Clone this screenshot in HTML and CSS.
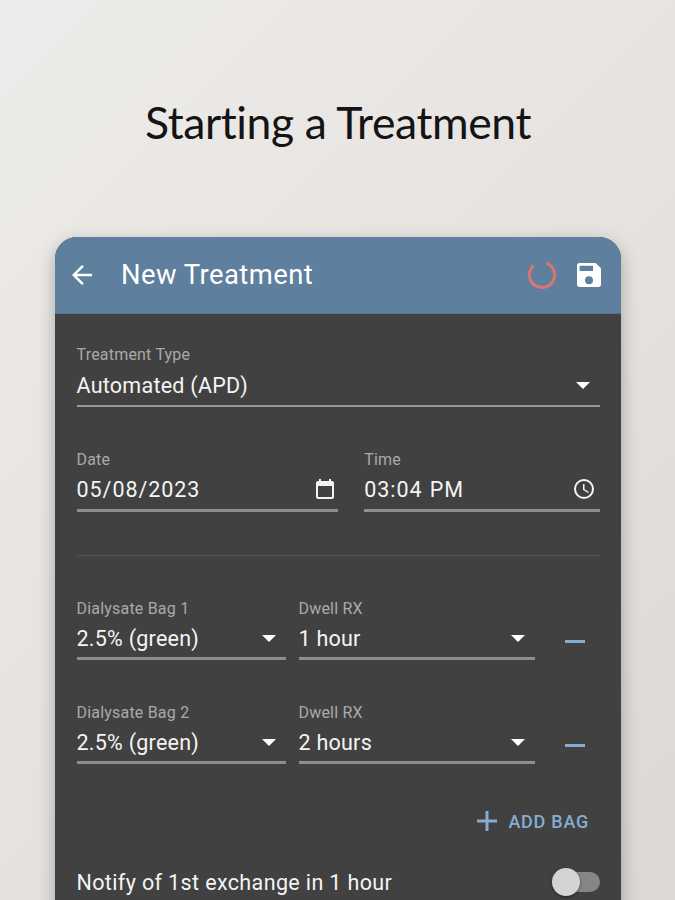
FILE: index.html
```html
<!DOCTYPE html>
<html lang="en">
<head>
<meta charset="utf-8">
<title>Starting a Treatment</title>
<link rel="stylesheet" href="styles.css">
</head>
<body>
<main class="screen">
  <h1 class="headline">Starting a Treatment</h1>
  <section class="card">
    <header class="appbar">
      <svg class="back" viewBox="0 0 24 24" width="30" height="30"><path d="M20 11H7.83l5.59-5.59L12 4l-8 8 8 8 1.41-1.41L7.83 13H20v-2z"/></svg>
      <div class="appbar-title">New Treatment</div>
      <svg class="spinner" viewBox="0 0 30 30" width="30" height="30"><path d="M19.5 3.2A12.6 12.6 0 1 1 6.6 5.6"/></svg>
      <svg class="save" viewBox="0 0 24 24" width="32" height="32"><path d="M17 3H5a2 2 0 0 0-2 2v14a2 2 0 0 0 2 2h14a2 2 0 0 0 2-2V7l-4-4zm-5 16a3 3 0 1 1 0-6 3 3 0 0 1 0 6zm3-10H5V5h10v4z"/></svg>
    </header>
    <div class="form">
      <div class="field field-type">
        <div class="label">Treatment Type</div>
        <div class="value-row"><span>Automated (APD)</span><span class="caret"></span></div>
      </div>
      <div class="row row-date">
        <div class="field field-date">
          <div class="label">Date</div>
          <div class="value-row"><span class="spaced">05/08/2023</span>
            <svg class="field-icon icon-cal" viewBox="0 0 24 24" width="24" height="24"><path d="M19 4h-1V2h-2v2H8V2H6v2H5a2 2 0 0 0-2 2v14a2 2 0 0 0 2 2h14a2 2 0 0 0 2-2V6a2 2 0 0 0-2-2zm0 16H5V9h14v11z"/></svg>
          </div>
        </div>
        <div class="field field-time">
          <div class="label">Time</div>
          <div class="value-row"><span class="spaced">03:04 PM</span>
            <svg class="field-icon icon-clock" viewBox="0 0 24 24" width="24" height="24"><path d="M12 2a10 10 0 1 0 0 20 10 10 0 0 0 0-20zm0 18a8 8 0 1 1 0-16 8 8 0 0 1 0 16zm.5-13H11v6l5.2 3.1.8-1.2-4.500-2.700V7z"/></svg>
          </div>
        </div>
      </div>
      <hr class="divider">
      <div class="row row-bag">
        <div class="field field-bag">
          <div class="label">Dialysate Bag 1</div>
          <div class="value-row"><span>2.5% (green)</span><span class="caret"></span></div>
        </div>
        <div class="field field-dwell">
          <div class="label">Dwell RX</div>
          <div class="value-row"><span>1 hour</span><span class="caret"></span></div>
        </div>
        <div class="minus"></div>
      </div>
      <div class="row row-bag">
        <div class="field field-bag">
          <div class="label">Dialysate Bag 2</div>
          <div class="value-row"><span>2.5% (green)</span><span class="caret"></span></div>
        </div>
        <div class="field field-dwell">
          <div class="label">Dwell RX</div>
          <div class="value-row"><span>2 hours</span><span class="caret"></span></div>
        </div>
        <div class="minus"></div>
      </div>
      <div class="add-row">
        <svg class="plus" viewBox="0 0 22 22" width="22" height="22"><path d="M9.500 1h3v8.500H21v3h-8.500V21h-3v-8.500H1v-3h8.500z"/></svg>
        <span>ADD BAG</span>
      </div>
      <div class="notify-row">
        <span>Notify of 1st exchange in 1 hour</span>
        <div class="switch"><div class="knob"></div></div>
      </div>
    </div>
  </section>
</main>
</body>
</html>
```
FILE: styles.css
```css
* { box-sizing: border-box; }
html, body { margin: 0; height: 100%; }
body { overflow: hidden; }
.screen {
  width: 675px;
  height: 900px;
  overflow: hidden;
  padding: 92px 54px 0 55px;
  background: linear-gradient(135deg, #eeecea 0%, #e5e2df 55%, #dcd8d4 100%);
}
.headline {
  margin: 0;
  height: 145px;
  font-family: "Lato", sans-serif;
  font-weight: 400;
  font-size: 44.500px;
  line-height: 60px;
  letter-spacing: -0.4px;
  text-align: center;
  color: #141414;
}
.card {
  width: 566px;
  height: 720px;
  border-radius: 22px 22px 0 0;
  overflow: hidden;
  background: #414141;
  box-shadow: 0 6px 18px rgba(0, 0, 0, 0.28);
}
.appbar {
  height: 77px;
  display: flex;
  align-items: center;
  padding: 0 16px 0 12px;
  background: #5f7f9e;
  border-bottom: 1px solid #54708b;
}
.back { fill: #fff; flex: none; }
.appbar-title {
  flex: 1;
  margin-left: 24px;
  font-family: "Roboto", sans-serif;
  font-weight: 400;
  font-size: 27.400px;
  letter-spacing: 0.45px;
  color: #fff;
}
.spinner { flex: none; fill: none; stroke: #d9776f; stroke-width: 3; margin-right: 16px; }
.save { fill: #fff; flex: none; }
.form {
  padding: 31px 21px 0 21.500px;
  font-family: "Roboto", sans-serif;
}
.label {
  height: 19px;
  font-size: 16px;
  line-height: 19px;
  letter-spacing: 0.2px;
  color: #a9a9a9;
}
.value-row {
  height: 43px;
  display: flex;
  align-items: center;
  justify-content: space-between;
  padding-top: 1px;
  font-size: 21.500px;
  letter-spacing: 0.25px;
  color: #f4f4f4;
  border-bottom: 2px solid #989898;
}
.spaced { letter-spacing: 0.95px; word-spacing: 1px; }
.caret {
  flex: none;
  width: 0;
  height: 0;
  margin-right: 10px;
  border-left: 7px solid transparent;
  border-right: 7px solid transparent;
  border-top: 7px solid #fff;
}
.row { display: flex; }
.row-date { margin-top: 43px; gap: 26.500px; }
.row-date .value-row { padding-top: 0; border-bottom: 3px solid #8e8e8e; }
.field-date { width: 261.500px; }
.field-time { width: 236px; }
.field-icon { flex: none; fill: #f4f4f4; }
.icon-cal { margin-right: 1px; }
.icon-clock { margin-right: 4px; }
.divider {
  margin: 43px 0 0;
  border: 0;
  height: 1px;
  background: #565656;
}
.row-bag { margin-top: 43px; align-items: flex-start; }
.row-bag .value-row { height: 42px; padding-top: 1px; border-bottom: 3px solid #8e8e8e; }
.field-bag { width: 209px; }
.field-dwell { width: 236px; margin-left: 13px; }
.minus {
  width: 20px;
  height: 3px;
  margin: 41px 0 0 30px;
  background: #86acd0;
}
.add-row {
  margin-top: 46px;
  display: flex;
  align-items: center;
  justify-content: flex-end;
  gap: 10px;
  padding-right: 11px;
  font-weight: 500;
  font-size: 18px;
  letter-spacing: 0.75px;
  color: #86acd0;
}
.plus { fill: #86acd0; flex: none; }
.notify-row {
  margin-top: 38px;
  display: flex;
  align-items: center;
  justify-content: space-between;
  font-size: 21.500px;
  letter-spacing: 0.37px;
  color: #f4f4f4;
}
.switch {
  position: relative;
  width: 40px;
  height: 20px;
  margin-bottom: 1px;
  border-radius: 10px;
  background: #868686;
}
.knob {
  position: absolute;
  left: -8px;
  top: -4px;
  width: 28px;
  height: 28px;
  border-radius: 50%;
  background: #d4d4d4;
  box-shadow: 0 1px 3px rgba(0, 0, 0, 0.45);
}
```
